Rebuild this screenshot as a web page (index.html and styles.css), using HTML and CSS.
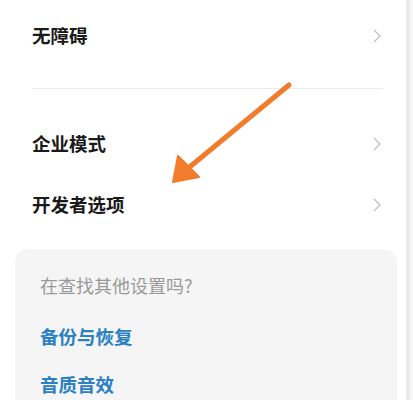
FILE: index.html
```html
<!DOCTYPE html>
<html lang="zh">
<head>
<meta charset="utf-8">
<link rel="stylesheet" href="styles.css">
</head>
<body>
<div class="page">
  <div class="main">
    <div class="row first">
      <span class="label">无障碍</span>
      <svg class="chev" viewBox="0 0 8 14" width="8" height="14"><path d="M1 1 L7 7 L1 13" fill="none" stroke="#bdbdbd" stroke-width="1.2"/></svg>
    </div>
    <div class="divider"></div>
    <div class="row second">
      <span class="label">企业模式</span>
      <svg class="chev" viewBox="0 0 8 14" width="8" height="14"><path d="M1 1 L7 7 L1 13" fill="none" stroke="#bdbdbd" stroke-width="1.2"/></svg>
    </div>
    <div class="row">
      <span class="label">开发者选项</span>
      <svg class="chev" viewBox="0 0 8 14" width="8" height="14"><path d="M1 1 L7 7 L1 13" fill="none" stroke="#bdbdbd" stroke-width="1.2"/></svg>
    </div>
    <div class="card">
      <div class="hint">在查找其他设置吗?</div>
      <div class="link firstlink">备份与恢复</div>
      <div class="link">音质音效</div>
    </div>
    <svg class="arrow" viewBox="0 0 413 400" width="413" height="400">
      <line x1="289" y1="85" x2="186" y2="170" stroke="#f37b2c" stroke-width="5" stroke-linecap="round"/>
      <polygon points="173,182 178,156 199,177" fill="#f37b2c" stroke="#f37b2c" stroke-width="2" stroke-linejoin="round"/>
    </svg>
  </div>
  <div class="bar"></div>
  <div class="edge"></div>
</div>
</body>
</html>
```
FILE: styles.css
```css
html, body {
  margin: 0;
  padding: 0;
  background: #ffffff;
}
body {
  font-family: "Noto Sans CJK SC", "Noto Sans", sans-serif;
  width: 413px;
  height: 400px;
  overflow: hidden;
}
.page {
  display: flex;
  height: 400px;
  overflow: hidden;
}
.main {
  position: relative;
  width: 406px;
  height: 400px;
  flex: none;
  background: #ffffff;
  overflow: hidden;
}
.bar {
  width: 4px;
  flex: none;
  background: #ebebeb;
}
.edge {
  flex: 1;
  background: #f6f6f6;
}
.row {
  display: flex;
  align-items: center;
  justify-content: space-between;
  height: 61px;
  padding: 0 25px 0 32px;
}
.row.first {
  margin-top: 5px;
}
.row.second {
  margin-top: 24px;
}
.label {
  font-size: 18.5px;
  font-weight: 600;
  color: #1a1a1a;
  line-height: 1;
}
.divider {
  height: 1px;
  background: #ececec;
  margin: 22px 23px 0 32px;
}
.card {
  margin: 14px 9px 0 15px;
  background: #f5f5f5;
  border-radius: 14px;
  padding: 24px 25px 0 25px;
  height: 160px;
}
.hint {
  font-size: 18px;
  line-height: 24px;
  color: #9a9a9a;
}
.link {
  font-size: 18.5px;
  font-weight: 600;
  line-height: 48px;
  color: #2a80c2;
}
.firstlink {
  margin-top: 15px;
}
.arrow {
  position: absolute;
  left: 0;
  top: 0;
  pointer-events: none;
}
```
